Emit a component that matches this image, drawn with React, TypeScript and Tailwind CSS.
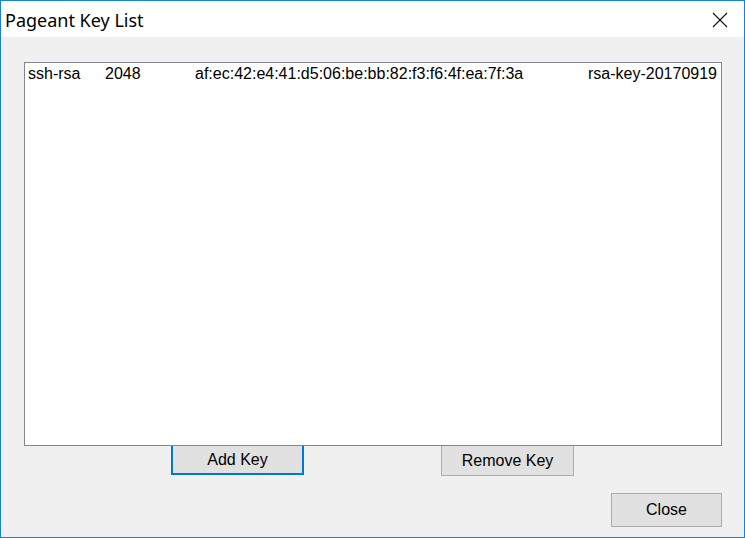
import React from "react";

export default function App() {
  const font = { fontFamily: '"Liberation Sans", Arial, sans-serif' };
  return (
    <div className="w-[745px] h-[538px] border border-[#1883d7] flex flex-col bg-[#f0f0f0] overflow-hidden">
      <div className="h-[36px] bg-white flex items-center justify-between shrink-0">
        <div
          className="pl-[4px] text-[18px] text-[#000] leading-none pt-[1px]"
          style={{ fontFamily: '"Noto Sans", "Open Sans", sans-serif' }}
        >
          Pageant Key List
        </div>
        <svg width="16" height="16" viewBox="0 0 16 16" className="mr-[16px] mt-[2px]">
          <path d="M1 1 L15 15 M15 1 L1 15" stroke="#111" strokeWidth="1.1" fill="none" />
        </svg>
      </div>
      <div className="flex-1 flex flex-col pt-[25px] pl-[23px] pr-[22px]" style={font}>
        <div className="relative z-10 w-[698px] h-[384px] bg-white border border-[#828790] pt-[2px] pl-[3px] pr-[4px]">
          <div className="flex text-[16px] leading-[18px] text-black">
            <div className="w-[77px]">ssh-rsa</div>
            <div className="w-[90px]">2048</div>
            <div className="flex-1">af:ec:42:e4:41:d5:06:be:bb:82:f3:f6:4f:ea:7f:3a</div>
            <div className="text-right">rsa-key-20170919</div>
          </div>
        </div>
        <div className="flex items-start -mt-[3px] text-[16px] text-black">
          <button className="ml-[147px] w-[133px] h-[32px] bg-[#e1e1e1] border-2 border-[#0078d7] flex items-center justify-center pt-[1px]">
            Add Key
          </button>
          <button className="ml-[137px] mt-[2px] w-[133px] h-[31px] bg-[#e1e1e1] border border-[#adadad] flex items-center justify-center">
            Remove Key
          </button>
        </div>
        <div className="flex justify-end mt-[17px]">
          <button className="w-[111px] h-[34px] bg-[#e1e1e1] border border-[#adadad] flex items-center justify-center text-[16px] text-black">
            Close
          </button>
        </div>
      </div>
    </div>
  );
}
